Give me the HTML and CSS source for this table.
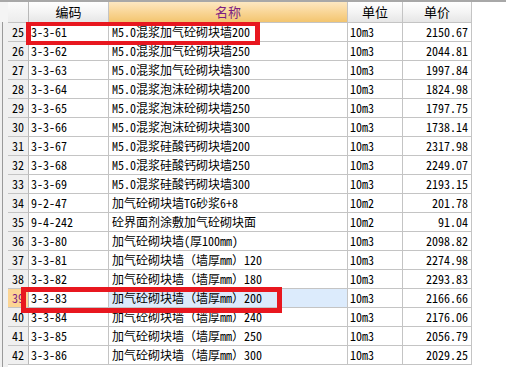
FILE: index.html
```html
<!DOCTYPE html>
<html lang="zh">
<head>
<meta charset="utf-8">
<link rel="stylesheet" href="styles.css">
</head>
<body>
<div class="frame">
  <div class="side"></div>
  <div class="sheet">
    <div class="row head">
      <div class="c num"></div>
      <div class="c code">编码</div>
      <div class="c name active">名称</div>
      <div class="c unit">单位</div>
      <div class="c price">单价</div>
    </div>
    <div class="row"><div class="c num">25</div><div class="c code">3-3-61</div><div class="c name">M5.0混浆加气砼砌块墙200</div><div class="c unit">10m3</div><div class="c price">2150.67</div></div>
    <div class="row"><div class="c num">26</div><div class="c code">3-3-62</div><div class="c name">M5.0混浆加气砼砌块墙250</div><div class="c unit">10m3</div><div class="c price">2044.81</div></div>
    <div class="row"><div class="c num">27</div><div class="c code">3-3-63</div><div class="c name">M5.0混浆加气砼砌块墙300</div><div class="c unit">10m3</div><div class="c price">1997.84</div></div>
    <div class="row"><div class="c num">28</div><div class="c code">3-3-64</div><div class="c name">M5.0混浆泡沫砼砌块墙200</div><div class="c unit">10m3</div><div class="c price">1824.98</div></div>
    <div class="row"><div class="c num">29</div><div class="c code">3-3-65</div><div class="c name">M5.0混浆泡沫砼砌块墙250</div><div class="c unit">10m3</div><div class="c price">1797.75</div></div>
    <div class="row"><div class="c num">30</div><div class="c code">3-3-66</div><div class="c name">M5.0混浆泡沫砼砌块墙300</div><div class="c unit">10m3</div><div class="c price">1738.14</div></div>
    <div class="row"><div class="c num">31</div><div class="c code">3-3-67</div><div class="c name">M5.0混浆硅酸钙砌块墙200</div><div class="c unit">10m3</div><div class="c price">2317.98</div></div>
    <div class="row"><div class="c num">32</div><div class="c code">3-3-68</div><div class="c name">M5.0混浆硅酸钙砌块墙250</div><div class="c unit">10m3</div><div class="c price">2249.07</div></div>
    <div class="row"><div class="c num">33</div><div class="c code">3-3-69</div><div class="c name">M5.0混浆硅酸钙砌块墙300</div><div class="c unit">10m3</div><div class="c price">2193.15</div></div>
    <div class="row"><div class="c num">34</div><div class="c code">9-2-47</div><div class="c name">加气砼砌块墙TG砂浆6+8</div><div class="c unit">10m2</div><div class="c price">201.78</div></div>
    <div class="row"><div class="c num">35</div><div class="c code">9-4-242</div><div class="c name">砼界面剂涂敷加气砼砌块面</div><div class="c unit">10m2</div><div class="c price">91.04</div></div>
    <div class="row"><div class="c num">36</div><div class="c code">3-3-80</div><div class="c name">加气砼砌块墙(厚100mm)</div><div class="c unit">10m3</div><div class="c price">2098.82</div></div>
    <div class="row"><div class="c num">37</div><div class="c code">3-3-81</div><div class="c name">加气砼砌块墙（墙厚mm）120</div><div class="c unit">10m3</div><div class="c price">2274.98</div></div>
    <div class="row"><div class="c num">38</div><div class="c code">3-3-82</div><div class="c name">加气砼砌块墙（墙厚mm）180</div><div class="c unit">10m3</div><div class="c price">2293.83</div></div>
    <div class="row sel"><div class="c num">39</div><div class="c code">3-3-83</div><div class="c name">加气砼砌块墙（墙厚mm）200</div><div class="c unit">10m3</div><div class="c price">2166.66</div></div>
    <div class="row"><div class="c num">40</div><div class="c code">3-3-84</div><div class="c name">加气砼砌块墙（墙厚mm）240</div><div class="c unit">10m3</div><div class="c price">2176.06</div></div>
    <div class="row"><div class="c num">41</div><div class="c code">3-3-85</div><div class="c name">加气砼砌块墙（墙厚mm）250</div><div class="c unit">10m3</div><div class="c price">2056.79</div></div>
    <div class="row"><div class="c num">42</div><div class="c code">3-3-86</div><div class="c name">加气砼砌块墙（墙厚mm）300</div><div class="c unit">10m3</div><div class="c price">2029.25</div></div>
  </div>
  <div class="mark mark-a"></div>
  <div class="mark mark-b"></div>
</div>
</body>
</html>
```
FILE: styles.css
```css
html, body {
  margin: 0;
  padding: 0;
  background: #ffffff;
}
body {
  font-family: "Noto Sans Mono CJK SC", "Noto Sans CJK SC", "DejaVu Sans Mono", monospace;
  font-size: 12px;
  color: #000;
  overflow: hidden;
}
.frame {
  position: relative;
  display: flex;
  width: 506px;
  height: 367px;
  border-top: 2px solid #a8a8a8;
  box-sizing: border-box;
  background: #ffffff;
}
.side {
  width: 8px;
  flex: none;
  background: linear-gradient(to bottom, #f4f4f4 0, #f4f4f4 20px, transparent 20px),
              linear-gradient(to right, #f0f0f0 0, #f0f0f0 2px, #9a9a9a 2px, #9a9a9a 3px, #f0f0f0 3px);
}
.sheet {
  display: flex;
  flex-direction: column;
}
.row {
  display: flex;
  height: 19px;
}
.row.head {
  height: 21px;
}
.c {
  box-sizing: border-box;
  border-right: 1px solid #c4c4c4;
  border-bottom: 1px solid #c4c4c4;
  white-space: nowrap;
  overflow: hidden;
  line-height: 18px;
  padding-left: 2px;
}
.num {
  width: 21px;
  padding: 0;
  text-align: center;
  background: #f0f0f0;
  border-right-color: #b8b8b8;
}
.code { width: 80px; }
.name { width: 239px; padding-left: 3px; }
.unit { width: 55px; padding-left: 2px; }
.price { width: 69px; text-align: right; padding-right: 3px; padding-left: 0; }

.head .c {
  line-height: 20px;
  font-family: "Noto Sans CJK SC", sans-serif;
  font-size: 13px;
  text-align: center;
  padding: 0;
  background: linear-gradient(to bottom, #ffffff 0%, #f4f4f4 50%, #e6e6e6 100%);
}
.head .num {
  background: linear-gradient(to bottom, #fbfbfb, #ececec);
}
.head .name.active {
  color: #7d1f83;
  background: linear-gradient(to bottom, #fde8c2 0%, #f9d697 50%, #f3c56f 100%);
}
.sel .num {
  background: #fcd594;
  color: #7d1f83;
}
.sel .name {
  background: #dcebfc;
}
.mark {
  position: absolute;
  border: 5px solid #e8171f;
  box-sizing: border-box;
}
.mark-a {
  left: 26px;
  top: 20px;
  width: 234px;
  height: 23px;
  border-top-width: 4px;
  border-bottom-width: 4px;
}
.mark-b {
  left: 21px;
  top: 285px;
  width: 261px;
  height: 26px;
}
```
